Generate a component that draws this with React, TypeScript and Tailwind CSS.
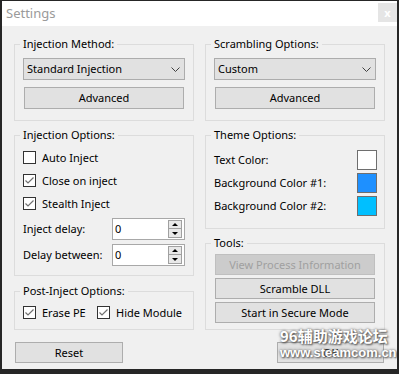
import React from 'react';

function Group({ title, className = '', children }: { title: string; className?: string; children: React.ReactNode }) {
  return (
    <fieldset className="w-[180px] border border-[#dcdcdc]">
      <legend className="ml-[5px] px-[3px] text-[11px] leading-[16px]">{title}</legend>
      <div className={className}>{children}</div>
    </fieldset>
  );
}

function Select({ value }: { value: string }) {
  return (
    <div className="mx-[8px] mt-[6px] flex h-[22px] items-center justify-between border border-[#acacac] bg-[#e1e1e1] pl-[3px] pr-[3px]">
      <span>{value}</span>
      <svg width="9" height="5" viewBox="0 0 9 5" className="mr-[1px]">
        <path d="M0.5 0.5 L4.5 4.5 L8.5 0.5" stroke="#404040" fill="none" />
      </svg>
    </div>
  );
}

function Button({ label, className = '', disabled = false }: { label: string; className?: string; disabled?: boolean }) {
  return (
    <div
      className={`flex items-center justify-center border ${
        disabled ? 'border-[#bfbfbf] bg-[#cccccc] text-[#a0a0a0]' : 'border-[#adadad] bg-[#e1e1e1]'
      } ${className}`}
    >
      {label}
    </div>
  );
}

function Check({ label, checked, className = '' }: { label: string; checked?: boolean; className?: string }) {
  return (
    <div className={`flex h-[23px] items-center gap-[6px] ${className}`}>
      <div className="flex h-[13px] w-[13px] items-center justify-center border border-[#333333] bg-white">
        {checked && (
          <svg width="11" height="11" viewBox="0 0 11 11">
            <path d="M1.5 5.5 L4 8 L9.5 2.5" stroke="#707070" strokeWidth="1.2" fill="none" />
          </svg>
        )}
      </div>
      <span>{label}</span>
    </div>
  );
}

function Spin({ label, className = '' }: { label: string; className?: string }) {
  return (
    <div className={`flex items-center justify-between ${className}`}>
      <span>{label}</span>
      <div className="flex h-[22px] w-[73px] items-center justify-between border border-[#a8a8a8] bg-white pl-[2px] pr-[2px]">
        <span>0</span>
        <div className="flex flex-col">
          <div className="flex h-[9px] w-[14px] items-center justify-center border border-[#a0a0a0] bg-[#e8e8e8]">
            <svg width="6" height="3" viewBox="0 0 6 3"><path d="M0 3 L3 0 L6 3 Z" fill="#000" /></svg>
          </div>
          <div className="flex h-[9px] w-[14px] items-center justify-center border border-t-0 border-[#a0a0a0] bg-[#e8e8e8]">
            <svg width="6" height="3" viewBox="0 0 6 3"><path d="M0 0 L6 0 L3 3 Z" fill="#000" /></svg>
          </div>
        </div>
      </div>
    </div>
  );
}

function Swatch({ label, color }: { label: string; color: string }) {
  return (
    <div className="flex h-[23px] items-center justify-between">
      <span>{label}</span>
      <div className={`h-[20px] w-[20px] border border-[#6e6e6e] ${color}`} />
    </div>
  );
}

export default function App() {
  return (
    <div className="h-[374px] w-[399px] bg-[#262626] pl-[2px] pt-[1px] font-['Noto_Sans',sans-serif] text-[11px] leading-[16px] text-black">
      <div className="relative flex h-[368px] w-[395px] flex-col overflow-hidden bg-[#f0f0f0]">
        {/* title bar */}
        <div className="flex h-[25px] items-start justify-between bg-white">
          <span className="ml-[4px] mt-[4px] text-[13px] text-[#9a9a9a]">Settings</span>
          <div className="mt-[2px] flex h-[19px] w-[19px] items-center justify-center bg-[#e5e5e5] text-[11px] font-bold text-white">
            x
          </div>
        </div>

        <div className="flex gap-[11px] px-[12px] pt-[10px]">
          {/* left column */}
          <div className="flex flex-col">
            <Group title="Injection Method:" className="pb-[11px]">
              <Select value="Standard Injection" />
              <Button label="Advanced" className="mx-[9px] mt-[7px] h-[22px]" />
            </Group>

            <div className="mt-[6px]">
              <Group title="Injection Options:" className="px-[8px] pb-[9px]">
                <Check label="Auto Inject" className="mt-[3px]" />
                <Check label="Close on inject" checked />
                <Check label="Stealth Inject" checked />
                <Spin label="Inject delay:" className="mt-[3px]" />
                <Spin label="Delay between:" className="mt-[4px]" />
              </Group>
            </div>

            <div className="mt-[7px]">
              <Group title="Post-Inject Options:" className="px-[8px] pb-[5px]">
                <div className="mt-[2px] flex">
                  <Check label="Erase PE" checked className="w-[74px]" />
                  <Check label="Hide Module" checked />
                </div>
              </Group>
            </div>

            <Button label="Reset" className="ml-[1px] mt-[12px] h-[21px] w-[108px]" />
          </div>

          {/* right column */}
          <div className="flex flex-col">
            <Group title="Scrambling Options:" className="pb-[11px]">
              <Select value="Custom" />
              <Button label="Advanced" className="mx-[9px] mt-[7px] h-[22px]" />
            </Group>

            <div className="mt-[6px]">
              <Group title="Theme Options:" className="pb-[11px] pl-[8px] pr-[7px]">
                <div className="mt-[5px]">
                  <Swatch label="Text Color:" color="bg-white" />
                  <Swatch label="Background Color #1:" color="bg-[#1e90ff]" />
                  <Swatch label="Background Color #2:" color="bg-[#00bfff]" />
                </div>
              </Group>
            </div>

            <div className="mt-[6px]">
              <Group title="Tools:" className="px-[9px] pb-[6px]">
                <div className="mt-[3px] flex flex-col gap-[3px]">
                  <Button label="View Process Information" disabled className="h-[21px]" />
                  <Button label="Scramble DLL" className="h-[21px]" />
                  <Button label="Start in Secure Mode" className="h-[21px]" />
                </div>
              </Group>
            </div>

            <Button label="OK" className="ml-auto mr-[1px] mt-[12px] h-[21px] w-[107px]" />
          </div>
        </div>

        {/* forum watermark */}
        <div className="absolute left-[278px] top-[326px] flex flex-col font-bold leading-[17px] text-white [text-shadow:0_0_3px_#555,1px_1px_2px_#555]">
          <span className="font-['Noto_Sans_CJK_SC',sans-serif] text-[15px]">96辅助游戏论坛</span>
          <span className="font-['Liberation_Sans',sans-serif] text-[13px]">www.steamcom.cn</span>
        </div>
      </div>
    </div>
  );
}
